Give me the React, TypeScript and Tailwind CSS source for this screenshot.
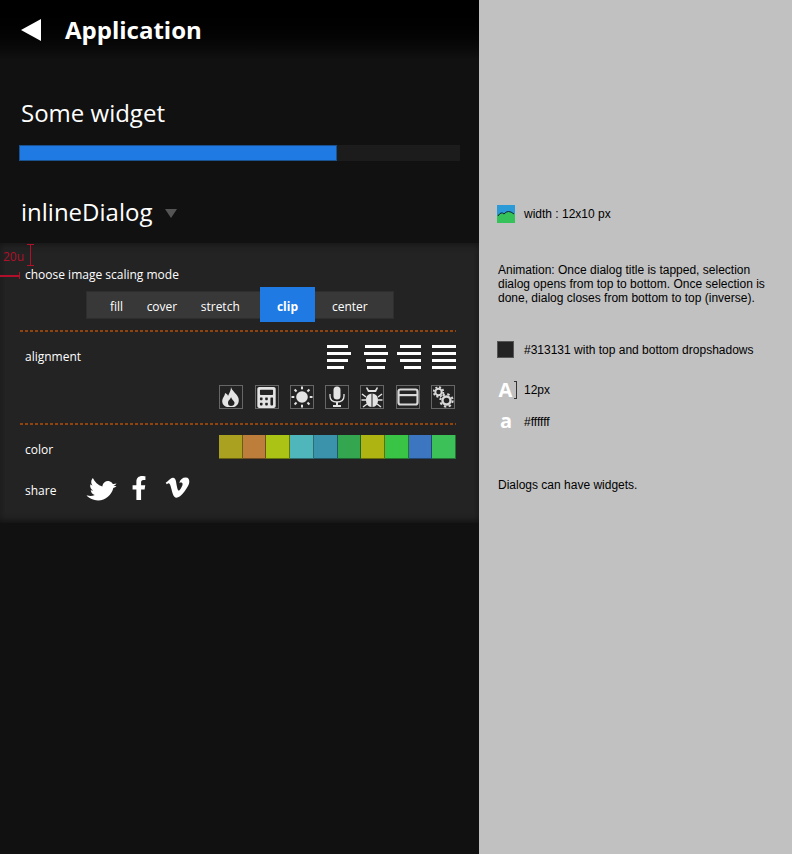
import { FaCalculator, FaFacebookF, FaTwitter, FaVimeoV } from 'react-icons/fa'

const modes = ['fill', 'cover', 'stretch']
const swatches = ['#aba121', '#bc7e3a', '#abc315', '#4fb6bb', '#3a93ab', '#35a650', '#aeb513', '#3ac445', '#3c76c0', '#3cc158']
const aligns = [
  { x: 'items-start', m: 'ml-0', w: ['w-[21px]', 'w-[24px]', 'w-[21px]', 'w-[17px]'] },
  { x: 'items-center', m: 'ml-[12.5px]', w: ['w-[21px]', 'w-[24px]', 'w-[20px]', 'w-[18px]'] },
  { x: 'items-end', m: 'ml-[9.5px]', w: ['w-[21px]', 'w-[24px]', 'w-[21px]', 'w-[17px]'] },
  { x: 'items-center', m: 'ml-[11px]', w: ['w-[24px]', 'w-[24px]', 'w-[24px]', 'w-[24px]'] }
]

function Divider(): JSX.Element {
  return (
    <div className="ml-5 w-[436px] h-[2px] bg-[repeating-linear-gradient(90deg,#8f4410_0,#8f4410_3px,transparent_3px,transparent_5px)]" />
  )
}

function ToolBox({ children }: { children: React.ReactNode }): JSX.Element {
  return <div className="w-[24px] h-[24px] border border-[#666] flex items-center justify-center text-[#e4e4e4] overflow-hidden">{children}</div>
}

function Flame(): JSX.Element {
  return (
    <svg viewBox="0 0 22 22" className="w-[22px] h-[22px]">
      <path
        fillRule="evenodd"
        fill="#e4e4e4"
        d="M11 1C12 5 16 7 18 11C20 15 18 20 14 21H7C3 20 1 16 3 12C4 10 5 9 5 7C7 8 8 9 8 10C9 7 11 5 11 1ZM11 11C11 13 8 14 8 17C8 19 9 20 11 20C13 20 14.500 19 14.500 17C14.500 15 12 14 11 11Z"
      />
    </svg>
  )
}

function Sun(): JSX.Element {
  const rays = [0, 45, 90, 135, 180, 225, 270, 315]
  return (
    <svg viewBox="0 0 22 22" className="w-[22px] h-[22px]">
      <circle cx="11" cy="11" r="5.800" fill="#e4e4e4" />
      {rays.map((r) => (
        <rect key={r} x="10" y="0.500" width="2" height="2.800" fill="#e4e4e4" transform={`rotate(${r} 11 11)`} />
      ))}
    </svg>
  )
}

function Mic(): JSX.Element {
  return (
    <svg viewBox="0 0 22 22" className="w-[22px] h-[22px]">
      <rect x="7.500" y="0.500" width="7" height="13" rx="3.500" fill="#e4e4e4" />
      <path d="M4 8V10C4 14 7 16 11 16C15 16 18 14 18 10V8" fill="none" stroke="#e4e4e4" strokeWidth="1.300" />
      <path d="M10 16H12V19H15V21H7V19H10Z" fill="#e4e4e4" />
    </svg>
  )
}

function Bug(): JSX.Element {
  return (
    <svg viewBox="0 0 22 22" className="w-[22px] h-[22px]">
      <path d="M6 1L8 4H14L16 1L17 2L15 6H7L5 2Z" fill="#e4e4e4" />
      <path d="M10.500 7.500V21C7 21 5 18 5 14C5 11 6 8.500 10.500 7.500ZM11.500 7.500C16 8.500 17 11 17 14C17 18 15 21 11.500 21Z" fill="#e4e4e4" />
      <path d="M5 11L1 8M5 14H0.500M6 18L2 21M17 11L21 8M17 14H21.500M16 18L20 21" stroke="#e4e4e4" strokeWidth="1.500" />
    </svg>
  )
}

function Card(): JSX.Element {
  return (
    <svg viewBox="0 0 22 22" className="w-[22px] h-[22px]">
      <rect x="1.500" y="3.500" width="19" height="15" rx="2" fill="none" stroke="#d8d8d8" strokeWidth="2.200" />
      <rect x="2" y="8" width="18" height="2.200" fill="#d8d8d8" />
    </svg>
  )
}

function Gears(): JSX.Element {
  return (
    <svg viewBox="0 0 22 22" className="w-[22px] h-[22px]">
      <circle cx="6.500" cy="6" r="3.200" fill="none" stroke="#d8d8d8" strokeWidth="2" />
      <circle cx="6.500" cy="6" r="4.800" fill="none" stroke="#d8d8d8" strokeWidth="1.800" strokeDasharray="2 1.770" />
      <circle cx="14.500" cy="14.500" r="4" fill="none" stroke="#d8d8d8" strokeWidth="2.400" />
      <circle cx="14.500" cy="14.500" r="6.200" fill="none" stroke="#d8d8d8" strokeWidth="2" strokeDasharray="2.400 2.470" />
    </svg>
  )
}

function Dialog(): JSX.Element {
  return (
    <section className="relative mt-[11px] h-[280px] bg-[#232323] text-white text-[12px] shadow-[inset_0_-5px_6px_-3px_#111111,inset_0_5px_6px_-3px_#171717]">
      {/* spec annotation */}
      <div className="absolute left-[3px] top-[6px] text-[#b0102a] leading-4">20u</div>
      <div className="absolute left-[27px] top-[1px] w-[7px] h-[22px] border-y border-[#b0102a] flex justify-center">
        <div className="w-[1.500px] h-full bg-[#b0102a]" />
      </div>
      <div className="absolute left-0 top-[32px] w-[20px] h-[1.500px] bg-[#b0102a]" />
      <div className="absolute left-[19px] top-[29px] w-px h-[7px] bg-[#b0102a]" />

      <p className="pl-[25px] pt-[24px] leading-4">choose image scaling mode</p>
      <div className="relative mt-[8px] ml-[86px] w-[308px] h-[28px] bg-[#383838] border border-[#2e2e2e] flex items-center">
        <div className="flex pl-[23px] pt-[4px] gap-[23.500px]">
          {modes.map((m) => (
            <span key={m}>{m}</span>
          ))}
        </div>
        <div className="absolute left-[173px] -top-[5px] w-[55px] h-[35px] bg-[#1f7ae3] flex items-center justify-center pt-[5px] font-bold">clip</div>
        <span className="absolute left-[245px] pt-[4px]">center</span>
      </div>
      <div className="mt-[11px]">
        <Divider />
      </div>

      <div className="flex justify-between items-start pl-[25px] pr-[23px] pt-[13px]">
        <span className="leading-[24px]">alignment</span>
        <div className="flex">
          {aligns.map((a, i) => (
            <div key={i} className={`flex flex-col gap-[4px] ${a.x} ${a.m} w-[24px]`}>
              {a.w.map((w, j) => (
                <div key={j} className={`${w} h-[3px] bg-white`} />
              ))}
            </div>
          ))}
        </div>
      </div>

      <div className="flex justify-end gap-[11.300px] pr-[24px] pt-[16px]">
        <ToolBox><Flame /></ToolBox>
        <ToolBox><FaCalculator className="text-[21px]" /></ToolBox>
        <ToolBox><Sun /></ToolBox>
        <ToolBox><Mic /></ToolBox>
        <ToolBox><Bug /></ToolBox>
        <ToolBox><Card /></ToolBox>
        <ToolBox><Gears /></ToolBox>
      </div>

      <div className="mt-[14px]">
        <Divider />
      </div>

      <div className="flex justify-between items-center pl-[25px] pr-[23px] pt-[10px]">
        <span className="pt-[6px]">color</span>
        <div className="flex w-[237px]">
          {swatches.map((c) => (
            <div key={c} className="flex-1 h-[24px] border-r border-b border-black/40" style={{ backgroundColor: c }} />
          ))}
        </div>
      </div>

      <div className="flex items-center pl-[25px] pt-[18px] h-[43px]">
        <span className="w-[63px] pt-[3px]">share</span>
        <FaTwitter className="text-[27px] rotate-[15deg] mt-[1px]" />
        <FaFacebookF className="text-[24px] ml-[12px] -mt-[3px]" />
        <FaVimeoV className="text-[27px] ml-[13px] -mt-[4px]" />
      </div>
    </section>
  )
}

function Notes(): JSX.Element {
  return (
    <aside className="flex-1 bg-[#c1c1c1] pl-[18px] pr-[20px] text-[12px] leading-[14px] text-black font-['Liberation_Sans',sans-serif]">
      <div className="mt-[205px] flex items-center h-[18px]">
        <svg viewBox="0 0 18 18" className="w-[18px] h-[18px]">
          <rect width="18" height="18" fill="#2b9ad6" />
          <path d="M0 18V11Q4 6 7 9Q11 4 18 9V18Z" fill="#36c25a" />
          <path d="M1 11Q4 6 7 9Q11 4 17 9" fill="none" stroke="#123" strokeWidth="1" />
        </svg>
        <span className="ml-[9px]">width : 12x10 px</span>
      </div>
      <p className="mt-[40px] ml-px">
        Animation: Once dialog title is tapped, selection dialog opens from top to bottom. Once selection is done, dialog closes from bottom to top (inverse).
      </p>
      <div className="mt-[36px] flex items-center h-[17px]">
        <div className="w-[17px] h-[17px] bg-[#232323] border border-[#555]" />
        <span className="ml-[10px]">#313131 with top and bottom dropshadows</span>
      </div>
      <div className="mt-[22px] flex items-center h-[20px]">
        <span className="w-[17px] text-[20px] font-bold text-white text-center leading-none font-['Open_Sans',sans-serif]">A</span>
        <div className="w-[3px] h-[18px] border border-l-0 border-[#333]" />
        <span className="ml-[7px]">12px</span>
      </div>
      <div className="mt-[12px] flex items-center h-[20px]">
        <span className="w-[18px] text-[20px] font-bold text-white text-center leading-none pb-[3px] font-['Open_Sans',sans-serif]">a</span>
        <span className="ml-[9px]">#ffffff</span>
      </div>
      <p className="mt-[46px] ml-px">Dialogs can have widgets.</p>
    </aside>
  )
}

export default function App(): JSX.Element {
  return (
    <div className="flex w-[792px] h-[854px] overflow-hidden">
      <main className="w-[479px] h-full bg-[#111111] bg-gradient-to-b from-black to-[#111111] bg-[length:100%_60px] bg-no-repeat font-['Open_Sans',sans-serif] text-white">
        <header className="flex items-center h-[60px] pl-[21px]">
          <svg viewBox="0 0 20 22" className="w-[20px] h-[22px]">
            <path d="M0 11L20 0V22Z" fill="#fff" />
          </svg>
          <h1 className="ml-[24px] text-[24px] font-bold leading-none">Application</h1>
        </header>
        <h2 className="ml-[21px] mt-[35px] text-[24px] leading-[36px]">Some widget</h2>
        <div className="ml-[19px] mt-[14px] w-[441px] h-[16px] bg-[#1c1c1c]">
          <div className="w-[318px] h-full bg-[#1f7ae3] border border-[#19528f]" />
        </div>
        <div className="flex items-center ml-[21px] mt-[31px] h-[40px]">
          <span className="text-[24px]">inlineDialog</span>
          <div className="ml-[13px] mt-[2px] w-0 h-0 border-x-[6px] border-x-transparent border-t-[9px] border-t-[#555]" />
        </div>
        <Dialog />
      </main>
      <Notes />
    </div>
  )
}
